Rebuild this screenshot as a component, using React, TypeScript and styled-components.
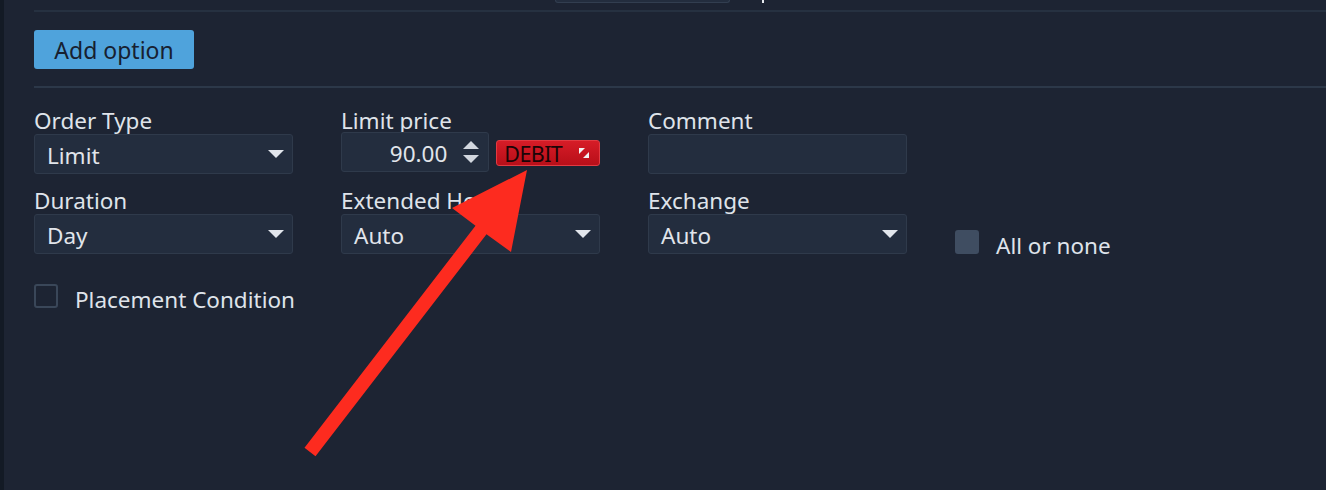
import React from 'react';
import styled, { createGlobalStyle } from 'styled-components';

const GlobalStyle = createGlobalStyle`
  html, body {
    margin: 0;
    padding: 0;
    background: #1d2433;
  }
  body {
    font-family: "Noto Sans", "Open Sans", sans-serif;
    color: #dde2ea;
  }
`;

const Page = styled.div`
  display: flex;
  width: 1326px;
  height: 490px;
  overflow: hidden;
  background: #1d2433;
`;

const Strip = styled.div`
  width: 4px;
  background: #131a25;
`;

const Main = styled.div`
  position: relative;
  flex: 1;
  display: flex;
  flex-direction: column;
`;

const TopStub = styled.div`
  height: 10px;
  display: flex;
  align-items: flex-start;
`;

const StubBox = styled.div`
  margin-left: 551px;
  width: 173px;
  height: 2px;
  background: #232d3e;
  border: 1px solid #323e50;
  border-top: none;
  border-radius: 0 0 3px 3px;
`;

const StubMark = styled.div`
  margin-left: 32px;
  width: 2px;
  height: 3px;
  background: #e6e9ee;
`;

const Separator = styled.div<{ $tone: string }>`
  margin-left: 30px;
  height: 2px;
  background: ${p => p.$tone};
`;

const ButtonRow = styled.div`
  padding: 18px 0 17px 30px;
  display: flex;
`;

const AddButton = styled.button`
  width: 160px;
  height: 39px;
  border: none;
  border-radius: 3px;
  background: #4fa3dc;
  color: #172030;
  font-family: "Noto Sans", sans-serif;
  font-size: 23px;
  line-height: 37px;
  padding: 2px 0 0;
  cursor: pointer;
`;

const Form = styled.div`
  padding: 22px 0 0 30px;
`;

const Grid = styled.div`
  display: grid;
  grid-template-columns: 259px 259px 259px auto;
  column-gap: 48px;
  row-gap: 16px;
`;

const Field = styled.div<{ $end?: boolean }>`
  display: flex;
  flex-direction: column;
  align-self: ${p => (p.$end ? 'end' : 'start')};
  margin-bottom: ${p => (p.$end ? '-4px' : '0')};
`;

const Label = styled.div`
  font-size: 22.5px;
  line-height: 22px;
  height: 24px;
  color: #dfe3ea;
  white-space: nowrap;
`;

const Box = styled.div<{ $w?: number }>`
  box-sizing: border-box;
  width: ${p => (p.$w ? `${p.$w}px` : '100%')};
  height: 40px;
  display: flex;
  align-items: center;
  background: #232d3e;
  border: 1px solid #2f3a4b;
  border-radius: 3px;
  font-size: 22.5px;
  color: #e1e5eb;
`;

const SelectValue = styled.span`
  flex: 1;
  padding: 2px 0 0 12px;
`;

const Caret = styled.span`
  width: 0;
  height: 0;
  margin-right: 8px;
  border-left: 8px solid transparent;
  border-right: 8px solid transparent;
  border-top: 8px solid #e2e6ec;
`;

const PriceRow = styled.div`
  display: flex;
  align-items: center;
  gap: 7px;
  margin-top: -2px;
`;

const PriceValue = styled.span`
  flex: 1;
  text-align: right;
  padding: 2px 16px 0 0;
`;

const Spinner = styled.span`
  display: flex;
  flex-direction: column;
  gap: 6px;
  margin-right: 9px;
`;

const SpinArrow = styled.span<{ $up?: boolean }>`
  width: 0;
  height: 0;
  border-left: 8px solid transparent;
  border-right: 8px solid transparent;
  ${p => (p.$up ? 'border-bottom: 8px solid #d2d7df;' : 'border-top: 8px solid #d2d7df;')}
`;

const Badge = styled.div`
  box-sizing: border-box;
  width: 104px;
  height: 26px;
  margin-top: 2px;
  display: flex;
  align-items: center;
  justify-content: space-between;
  padding: 0 10px 0 7px;
  background: linear-gradient(#d61c27, #b80f19);
  border: 1px solid #e23a42;
  border-radius: 3px;
  color: #1a0507;
  font-family: "Noto Sans", sans-serif;
  font-size: 21.5px;
  letter-spacing: -0.6px;
`;

const CheckRow = styled.label<{ $top?: number }>`
  display: flex;
  align-items: flex-start;
  gap: 17px;
  margin-top: ${p => p.$top ?? 0}px;
  font-size: 22.5px;
  color: #dfe3ea;
  white-space: nowrap;
`;

const CheckText = styled.span`
  line-height: 24px;
  margin-top: 4px;
`;

const CheckBox = styled.span<{ $filled?: boolean }>`
  box-sizing: border-box;
  width: 24px;
  height: 24px;
  border-radius: 3px;
  border: 2px solid ${p => (p.$filled ? '#3f4d61' : '#3a4759')};
  background: ${p => (p.$filled ? '#3f4d61' : 'transparent')};
`;

const Overlay = styled.svg`
  position: absolute;
  top: 0;
  left: -4px;
  pointer-events: none;
`;

function Select({ value }: { value: string }) {
  return (
    <Box>
      <SelectValue>{value}</SelectValue>
      <Caret />
    </Box>
  );
}

function ResizeGlyph() {
  return (
    <svg width="10" height="10" viewBox="0 0 10 10">
      <polygon points="0,0 6,0 0,6" fill="#f2f2f2" />
      <polygon points="10,4 10,10 4,10" fill="#f2f2f2" />
    </svg>
  );
}

export default function App() {
  return (
    <>
      <GlobalStyle />
      <Page>
        <Strip />
        <Main>
          <TopStub>
            <StubBox />
            <StubMark />
          </TopStub>
          <Separator $tone="#263141" />
          <ButtonRow>
            <AddButton>Add option</AddButton>
          </ButtonRow>
          <Separator $tone="#2c3849" />

          <Form>
            <Grid>
              <Field>
                <Label>Order Type</Label>
                <Select value="Limit" />
              </Field>
              <Field>
                <Label>Limit price</Label>
                <PriceRow>
                  <Box $w={149}>
                    <PriceValue>90.00</PriceValue>
                    <Spinner>
                      <SpinArrow $up />
                      <SpinArrow />
                    </Spinner>
                  </Box>
                  <Badge>
                    DEBIT
                    <ResizeGlyph />
                  </Badge>
                </PriceRow>
              </Field>
              <Field>
                <Label>Comment</Label>
                <Box />
              </Field>
              <div />

              <Field>
                <Label>Duration</Label>
                <Select value="Day" />
              </Field>
              <Field>
                <Label>Extended Hours</Label>
                <Select value="Auto" />
              </Field>
              <Field>
                <Label>Exchange</Label>
                <Select value="Auto" />
              </Field>
              <Field $end>
                <CheckRow>
                  <CheckBox $filled />
                  <CheckText>All or none</CheckText>
                </CheckRow>
              </Field>
            </Grid>

            <CheckRow $top={30}>
              <CheckBox />
              <CheckText>Placement Condition</CheckText>
            </CheckRow>
          </Form>

          <Overlay width="1326" height="490" viewBox="0 0 1326 490">
            <polygon
              points="304.5,447.7 475.5,225.7 452,208 527,170 511,252 486.5,234.3 315.5,456.3"
              fill="#fd2b1f"
            />
          </Overlay>
        </Main>
      </Page>
    </>
  );
}
